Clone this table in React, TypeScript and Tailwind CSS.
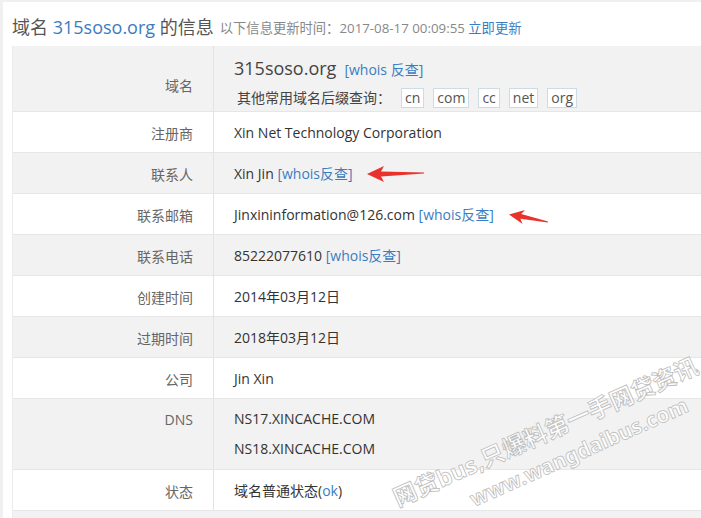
import type { ReactNode } from "react";

const font = { fontFamily: '"Open Sans", "Noto Sans CJK SC", sans-serif' };

function Link({ children }: { children: ReactNode }) {
  return <span className="text-[#3b7cc1]">{children}</span>;
}

function Row({
  label,
  gray,
  children,
}: {
  label: string;
  gray?: boolean;
  children: ReactNode;
}) {
  return (
    <div
      className={`flex h-[41px] border-b border-[#e6e6e6] ${gray ? "bg-[#f2f2f2]" : "bg-white"}`}
    >
      <div className="w-[201px] shrink-0 flex items-center justify-end pr-5 pt-[2px] text-[14px] text-[#666] border-r border-[#e3e3e3]">
        {label}
      </div>
      <div className="flex-1 flex items-center pl-5 pt-[1px] text-[14px] text-[#333]">
        {children}
      </div>
    </div>
  );
}

export default function App() {
  const tlds = ["cn", "com", "cc", "net", "org"];

  return (
    <div
      className="relative w-[701px] h-[518px] overflow-hidden bg-white border-l-[3px] border-t-2 border-[#f0f0f0]"
      style={font}
    >
      <div className="pl-[9px]">
        {/* 标题 */}
        <div className="h-[44px] pt-[6px] flex items-center whitespace-nowrap">
          <span className="text-[18px] text-[#555]">
            域名 <span className="text-[#3b7cc1]">315soso.org</span> 的信息
          </span>
          <span className="ml-[6px] mt-[4px] text-[13.3px] text-[#888]">
            以下信息更新时间：2017-08-17 00:09:55{" "}
            <span className="text-[#3b7cc1]">立即更新</span>
          </span>
        </div>

        {/* 信息表 */}
        <div className="w-[700px] border-l border-[#ececec]">
          <div className="flex h-[66px] border-b border-[#e6e6e6] bg-[#f2f2f2]">
            <div className="w-[201px] shrink-0 flex items-center justify-end pr-5 pt-[14px] text-[14px] text-[#666] border-r border-[#e3e3e3]">
              域名
            </div>
            <div className="flex-1 pl-5 pt-[8px]">
              <div className="h-[28px] flex items-center whitespace-nowrap">
                <span className="text-[18px] text-[#444]">315soso.org</span>
                <span className="ml-[8px] mt-[2px] text-[14px]">
                  <Link>[whois 反查]</Link>
                </span>
              </div>
              <div className="mt-[5px] flex items-center pl-[3px]">
                <span className="text-[14px] text-[#444] mr-[10px]">
                  其他常用域名后缀查询：
                </span>
                <div className="flex gap-[9px]">
                  {tlds.map((t) => (
                    <span
                      key={t}
                      className="h-[20px] px-[3px] flex items-center border border-[#cddbe5] bg-white text-[14px] text-[#555]"
                    >
                      {t}
                    </span>
                  ))}
                </div>
              </div>
            </div>
          </div>

          <Row label="注册商">Xin Net Technology Corporation</Row>
          <Row label="联系人" gray>
            Xin Jin&nbsp;<Link>[whois反查]</Link>
          </Row>
          <Row label="联系邮箱">
            Jinxininformation@126.com&nbsp;<Link>[whois反查]</Link>
          </Row>
          <Row label="联系电话" gray>
            85222077610&nbsp;<Link>[whois反查]</Link>
          </Row>
          <Row label="创建时间">2014年03月12日</Row>
          <Row label="过期时间" gray>
            2018年03月12日
          </Row>
          <Row label="公司">Jin Xin</Row>

          <div className="flex h-[71px] border-b border-[#e6e6e6] bg-[#f2f2f2]">
            <div className="w-[201px] shrink-0 flex justify-end pr-5 pt-[6px] leading-[30px] text-[14px] text-[#666] border-r border-[#e3e3e3]">
              DNS
            </div>
            <div className="flex-1 pl-5 pt-[5px] leading-[30px] text-[14px] text-[#333]">
              <div>NS17.XINCACHE.COM</div>
              <div>NS18.XINCACHE.COM</div>
            </div>
          </div>

          <Row label="状态">
            域名普通状态(<Link>ok</Link>)
          </Row>
          <div className="h-[41px] bg-[#f2f2f2]" />
        </div>
      </div>

      {/* 标注箭头和水印 */}
      <svg
        className="absolute left-[-3px] top-[-2px] pointer-events-none"
        width="701"
        height="518"
        viewBox="0 0 701 518"
      >
        <polygon
          fill="#e8322b"
          points="367,174 384,166 381,171.5 424,172.6 424,173.6 381,176.5 384,182"
        />
        <polygon
          fill="#e8322b"
          points="509,214.5 525,210 521.2,214 548,221.6 547.8,222.6 520.4,218.8 522.6,224"
        />
        <g
          fontWeight="bold"
          fill="#ffffff"
          fillOpacity="0.9"
          stroke="#bdbdbd"
          strokeWidth="0.8"
          style={{ fontFamily: '"Noto Sans", "Noto Sans CJK SC", sans-serif' }}
        >
          <text x="398" y="507" fontSize="23.5" transform="rotate(-24 398 507)">
            网贷bus,只爆料第一手网贷资讯
          </text>
          <text x="474" y="507" fontSize="21" transform="rotate(-24 474 507)">
            www.wangdaibus.com
          </text>
        </g>
      </svg>
    </div>
  );
}
